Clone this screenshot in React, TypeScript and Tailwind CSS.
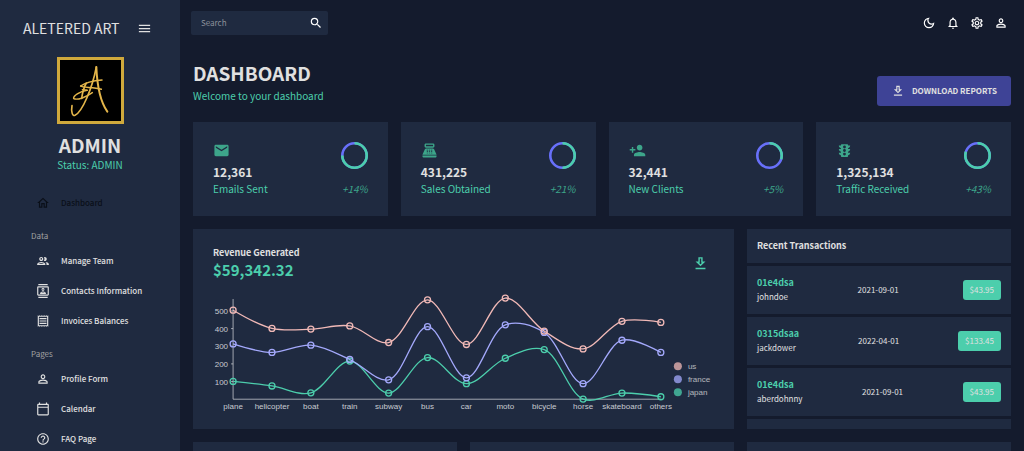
import React from 'react';
import type { IconType } from 'react-icons';
import {
  MdEmail,
  MdHelpOutline,
  MdOutlineCalendarToday,
  MdOutlineContacts,
  MdOutlineDarkMode,
  MdOutlineDownload,
  MdOutlineHome,
  MdOutlineMenu,
  MdOutlineNotifications,
  MdOutlinePeople,
  MdOutlineReceipt,
  MdOutlineSettings,
  MdPersonAdd,
  MdPersonOutline,
  MdPointOfSale,
  MdSearch,
  MdTraffic,
} from 'react-icons/md';

interface NavItemProps {
  label: string;
  icon: IconType;
  active?: boolean;
}

const NavItem: React.FC<NavItemProps> = ({ label, icon: Icon, active }) => (
  <a
    href="#"
    className={`flex h-[30px] items-center gap-[10px] pl-[35px] text-[8px] font-medium ${
      active ? 'text-[#0a0f18]' : 'text-[#e0e0e0]'
    }`}
  >
    <Icon className="size-4 p-px" />
    {label}
  </a>
);

const NavHeading: React.FC<{ children: React.ReactNode }> = ({ children }) => (
  <h3 className="pt-2 pl-[31px] text-[8px] leading-5 text-[#a3a3a3]">{children}</h3>
);

const Logo: React.FC = () => (
  <svg viewBox="0 0 201 201" className="size-[67px]" role="img" aria-label="Aletered Art logo">
    <rect width="201" height="201" fill="#d0a93c" />
    <rect x="9" y="9" width="183" height="183" fill="#000" />
    <g fill="none" stroke="#e3b54a" strokeLinecap="round" strokeLinejoin="round">
      <path d="M45 146c-3 18 1 32 9 29 22-10 52-82 64-145" strokeWidth="5" />
      <path d="M118 30c2 48 12 104 33 134" strokeWidth="6" />
      <path d="M71 87c14-10 40-16 64-18" strokeWidth="4.5" />
      <path d="M71 87c8 6 38 2 62 10" strokeWidth="4.5" />
      <path d="M88 78c-8 14-12 32-14 46" strokeWidth="5" />
      <path d="M76 98c5 0 10 0 15 2" strokeWidth="4" />
      <path d="M90 100c-22 4-42 16-40 25 12 5 38-5 56-18" strokeWidth="4.5" />
    </g>
  </svg>
);

const Sidebar: React.FC = () => (
  <aside className="w-[180px] shrink-0 bg-[#1f2a40]">
    <div className="flex h-[57px] items-center justify-between pr-7 pl-[23px]">
      <span className="text-[14px] text-[#e0e0e0]">ALETERED ART</span>
      <button type="button" aria-label="Collapse menu" className="text-[#e0e0e0]">
        <MdOutlineMenu className="size-[15px]" />
      </button>
    </div>
    <div className="flex flex-col items-center">
      <Logo />
      <h2 className="mt-2 text-[19px] leading-[26px] font-bold text-[#e0e0e0]">ADMIN</h2>
      <p className="text-[10px] leading-[14px] text-[#4cceac]">Status: ADMIN</p>
    </div>
    <nav className="mt-4">
      <NavItem label="Dashboard" icon={MdOutlineHome} active />
      <NavHeading>Data</NavHeading>
      <NavItem label="Manage Team" icon={MdOutlinePeople} />
      <NavItem label="Contacts Information" icon={MdOutlineContacts} />
      <NavItem label="Invoices Balances" icon={MdOutlineReceipt} />
      <NavHeading>Pages</NavHeading>
      <NavItem label="Profile Form" icon={MdPersonOutline} />
      <NavItem label="Calendar" icon={MdOutlineCalendarToday} />
      <NavItem label="FAQ Page" icon={MdHelpOutline} />
    </nav>
  </aside>
);

const topbarActions = [
  { label: 'Toggle colour mode', icon: MdOutlineDarkMode },
  { label: 'Notifications', icon: MdOutlineNotifications },
  { label: 'Settings', icon: MdOutlineSettings },
  { label: 'Account', icon: MdPersonOutline },
];

const Topbar: React.FC = () => (
  <div className="flex justify-between p-[11px]">
    <div className="flex h-6 w-[137px] items-center rounded-xs bg-[#1f2a40] pr-1 pl-[10px]">
      <input
        type="text"
        placeholder="Search"
        aria-label="Search"
        className="min-w-0 flex-1 text-[8px] text-[#e0e0e0] outline-none placeholder:text-[#8c919b]"
      />
      <button type="button" aria-label="Search" className="p-px text-white">
        <MdSearch className="size-[14px]" />
      </button>
    </div>
    <div className="flex">
      {topbarActions.map(({ label, icon: Icon }) => (
        <button
          key={label}
          type="button"
          aria-label={label}
          className="flex size-6 items-center justify-center text-white"
        >
          <Icon className="size-[14px]" />
        </button>
      ))}
    </div>
  </div>
);

const ProgressRing: React.FC<{ progress: number }> = ({ progress }) => (
  <svg viewBox="0 0 27 27" className="size-[27px]">
    <circle cx="13.5" cy="13.5" r="12.2" fill="none" stroke="#6870fa" strokeWidth="2.6" />
    <circle
      cx="13.5"
      cy="13.5"
      r="12.2"
      fill="none"
      stroke="#4cceac"
      strokeWidth="2.6"
      pathLength={100}
      strokeDasharray={`${progress} 100`}
      transform="rotate(-90 13.5 13.5)"
    />
  </svg>
);

interface Stat {
  value: string;
  label: string;
  increase: string;
  progress: number;
  icon: IconType;
}

const stats: Stat[] = [
  { value: '12,361', label: 'Emails Sent', increase: '+14%', progress: 75, icon: MdEmail },
  { value: '431,225', label: 'Sales Obtained', increase: '+21%', progress: 50, icon: MdPointOfSale },
  { value: '32,441', label: 'New Clients', increase: '+5%', progress: 30, icon: MdPersonAdd },
  { value: '1,325,134', label: 'Traffic Received', increase: '+43%', progress: 80, icon: MdTraffic },
];

const StatCard: React.FC<Stat> = ({ value, label, increase, progress, icon: Icon }) => (
  <div className="col-span-3 bg-[#1f2a40] px-5 pt-5 pb-[19px]">
    <div className="flex items-start justify-between">
      <div>
        <Icon className="mb-1 size-[17px] text-[#3da58a]" />
        <p className="text-[12px] leading-[18px] font-bold text-[#e0e0e0]">{value}</p>
      </div>
      <ProgressRing progress={progress} />
    </div>
    <div className="flex justify-between text-[10px] leading-4">
      <span className="text-[#4cceac]">{label}</span>
      <span className="text-[#3da58a] italic">{increase}</span>
    </div>
  </div>
);

const categories = [
  'plane', 'helicopter', 'boat', 'train', 'subway', 'bus',
  'car', 'moto', 'bicycle', 'horse', 'skateboard', 'others',
];

// y values are stacked: japan, then france, then us
const series = [
  { id: 'japan', color: '#4cceac', values: [101, 75, 36, 216, 35, 236, 88, 232, 281, 1, 35, 14] },
  { id: 'france', color: '#a4a9fc', values: [313, 265, 306, 225, 110, 411, 121, 421, 378, 88, 334, 265] },
  { id: 'us', color: '#f1b9b7', values: [504, 401, 397, 415, 321, 563, 310, 573, 386, 285, 441, 435] },
];

const LEFT = 40;
const RIGHT = 467;
const BASE = 119;
const TOP = 18;

type Point = [number, number];

const toX = (i: number) => LEFT + (i * (RIGHT - LEFT)) / (categories.length - 1);
const toY = (value: number) => BASE - (value * (BASE - TOP)) / 573;

// centripetal Catmull-Rom spline as cubic bezier segments
const curvePath = (points: Point[]) => {
  let d = `M${points[0][0]},${points[0][1]}`;
  for (let i = 0; i < points.length - 1; i++) {
    const p0 = points[i - 1] ?? points[i];
    const p1 = points[i];
    const p2 = points[i + 1];
    const p3 = points[i + 2] ?? p2;
    const a = Math.hypot(p1[0] - p0[0], p1[1] - p0[1]);
    const b = Math.hypot(p2[0] - p1[0], p2[1] - p1[1]);
    const c = Math.hypot(p3[0] - p2[0], p3[1] - p2[1]);
    const control = (near: Point, far: Point, prev: Point, len: number): Point => {
      if (len === 0) return near;
      const s = Math.sqrt(len * b);
      const k = 2 * len + 3 * s + b;
      const n = 3 * (len + s);
      return [
        (near[0] * k - prev[0] * b + far[0] * len) / n,
        (near[1] * k - prev[1] * b + far[1] * len) / n,
      ];
    };
    const c1 = control(p1, p2, p0, a);
    const c2 = control(p2, p1, p3, c);
    d += `C${c1[0]},${c1[1]} ${c2[0]},${c2[1]} ${p2[0]},${p2[1]}`;
  }
  return d;
};

const LineChart: React.FC = () => (
  <svg
    viewBox="0 0 540 149"
    className="block w-full font-['Liberation_Sans',Arial,sans-serif] text-[8px]"
    role="img"
    aria-label="Revenue by transport"
  >
    <path d={`M${LEFT} ${TOP + 1}V${BASE}H${RIGHT}`} fill="none" stroke="#c2c5cb" strokeWidth="0.8" />
    {[100, 200, 300, 400, 500].map((tick) => (
      <g key={tick}>
        <line x1={LEFT - 2} x2={LEFT} y1={toY(tick)} y2={toY(tick)} stroke="#c2c5cb" strokeWidth="0.8" />
        <text x={LEFT - 5} y={toY(tick) + 3} textAnchor="end" fill="#c8cbd1">
          {tick}
        </text>
      </g>
    ))}
    {categories.map((name, i) => (
      <text key={name} x={toX(i)} y={BASE + 10} textAnchor="middle" fill="#c8cbd1">
        {name}
      </text>
    ))}
    {series.map(({ id, color, values }) => {
      const points = values.map((value, i): Point => [toX(i), toY(value)]);
      return (
        <g key={id} fill="none" stroke={color} strokeWidth="1.3">
          <path d={curvePath(points)} />
          {points.map(([x, y]) => (
            <circle key={x} cx={x} cy={y} r="3" />
          ))}
        </g>
      );
    })}
    {[...series].reverse().map(({ id, color }, i) => (
      <g key={id} opacity="0.75">
        <circle cx="484" cy={86 + i * 13} r="4" fill={color} />
        <text x="494" y={89 + i * 13} fill="#e0e0e0">
          {id}
        </text>
      </g>
    ))}
  </svg>
);

const RevenueCard: React.FC = () => (
  <section className="col-span-8 bg-[#1f2a40]">
    <div className="flex items-center justify-between px-5 pt-[17px]">
      <div>
        <h2 className="text-[9px] leading-[14px] font-bold text-[#e0e0e0]">Revenue Generated</h2>
        <p className="text-[15px] leading-5 font-bold text-[#4cceac]">$59,342.32</p>
      </div>
      <button type="button" aria-label="Download revenue chart" className="p-[5px] text-[#4cceac]">
        <MdOutlineDownload className="size-[17px]" />
      </button>
    </div>
    <LineChart />
  </section>
);

const transactions = [
  { id: '01e4dsa', user: 'johndoe', date: '2021-09-01', cost: '43.95' },
  { id: '0315dsaa', user: 'jackdower', date: '2022-04-01', cost: '133.45' },
  { id: '01e4dsa', user: 'aberdohnny', date: '2021-09-01', cost: '43.95' },
];

const TransactionsCard: React.FC = () => (
  <section className="col-span-4 bg-[#1f2a40] text-[#e0e0e0]">
    <h2 className="border-b-3 border-[#141b2d] px-[10px] py-[10px] text-[9px] leading-[14px] font-bold">
      Recent Transactions
    </h2>
    <ul>
      {transactions.map(({ id, user, date, cost }, i) => (
        <li
          key={i}
          className="flex items-center justify-between border-b-3 border-[#141b2d] p-[10px] text-[8px] leading-[14px]"
        >
          <div>
            <p className="text-[9px] font-bold text-[#4cceac]">{id}</p>
            <p>{user}</p>
          </div>
          <time>{date}</time>
          <span className="rounded-[3px] bg-[#4cceac] px-[7px] py-[3px]">${cost}</span>
        </li>
      ))}
    </ul>
  </section>
);

const App: React.FC = () => (
  <div className="flex h-screen overflow-hidden bg-[#141b2d] font-['Noto_Sans_CJK_SC',sans-serif]">
    <Sidebar />
    <main className="min-w-0 flex-1">
      <Topbar />
      <div className="m-[13px]">
        <header className="flex items-end justify-between">
          <div>
            <h1 className="text-[19px] leading-[27px] font-bold text-[#e0e0e0]">DASHBOARD</h1>
            <p className="text-[10px] leading-5 text-[#4cceac]">Welcome to your dashboard</p>
          </div>
          <button
            type="button"
            className="flex h-[30px] items-center gap-[7px] rounded-[3px] bg-[#3e4396] px-[14px] text-[8px] font-bold text-[#e0e0e0]"
          >
            <MdOutlineDownload className="size-[14px]" />
            DOWNLOAD REPORTS
          </button>
        </header>
        <div className="mt-4 grid grid-cols-12 gap-[13px]">
          {stats.map((stat) => (
            <StatCard key={stat.label} {...stat} />
          ))}
          <RevenueCard />
          <TransactionsCard />
          <section className="col-span-4 h-[200px] bg-[#1f2a40]" />
          <section className="col-span-4 h-[200px] bg-[#1f2a40]" />
          <section className="col-span-4 h-[200px] bg-[#1f2a40]" />
        </div>
      </div>
    </main>
  </div>
);

export default App;
